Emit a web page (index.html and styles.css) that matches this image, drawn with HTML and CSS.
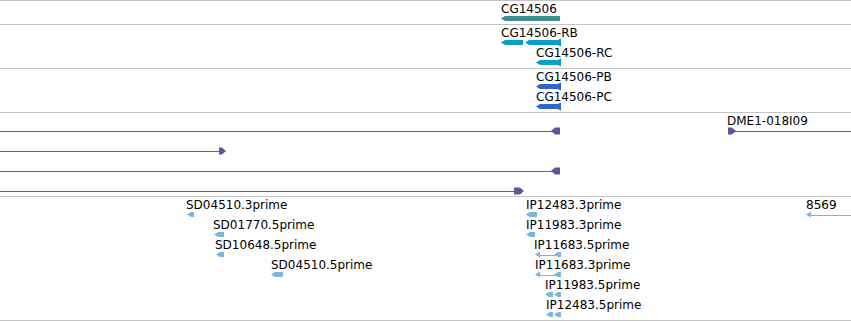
FILE: index.html
```html
<!DOCTYPE html>
<html lang="en">
<head>
    <meta charset="UTF-8" />
    <title>Tracks</title>
    <link rel="stylesheet" href="styles.css">
</head>
<body>
<div id="panel" class="panel"></div>

<script>
    const ROW = 20;
    const SVGNS = 'http://www.w3.org/2000/svg';

    // shapes use x in page px, row index, and the track colour
    const tracks = [
        { rows: 1, cls: 'gene', feats: [
            { label: 'CG14506', lx: 501, row: 0, parts: [['bar', 501, 560]] }
        ]},
        { rows: 2, cls: 'mrna', feats: [
            { label: 'CG14506-RB', lx: 501, row: 0, parts: [['exon', 501, 523], ['exon', 525, 558], ['tail', 552, 561]] },
            { label: 'CG14506-RC', lx: 536, row: 1, parts: [['exon', 536, 558], ['tail', 552, 561]] }
        ]},
        { rows: 2, cls: 'cds', feats: [
            { label: 'CG14506-PB', lx: 536, row: 0, parts: [['exon', 536, 558], ['tail', 552, 561]] },
            { label: 'CG14506-PC', lx: 536, row: 1, parts: [['exon', 536, 558], ['tail', 552, 561]] }
        ]},
        { rows: 4, cls: 'clone', feats: [
            { label: 'DME1-018I09', lx: 727, row: 0, parts: [['line', 733, 851], ['flagR', 728, 736]] },
            { row: 0, parts: [['line', 0, 553], ['flagL', 551, 560]] },
            { row: 1, parts: [['line', 0, 221], ['flagR', 219, 226]] },
            { row: 2, parts: [['line', 0, 553], ['flagL', 551, 560]] },
            { row: 3, parts: [['line', 0, 516], ['flagR', 514, 524]] }
        ]},
        { rows: 6, cls: 'est', feats: [
            { label: 'SD04510.3prime', lx: 186, row: 0, parts: [['exon', 187, 194]] },
            { label: 'SD01770.5prime', lx: 213, row: 1, parts: [['exon', 214, 224]] },
            { label: 'SD10648.5prime', lx: 215, row: 2, parts: [['exon', 216, 224]] },
            { label: 'SD04510.5prime', lx: 271, row: 3, parts: [['exon', 271, 283]] },
            { label: 'IP12483.3prime', lx: 526, row: 0, parts: [['exon', 526, 537]] },
            { label: 'IP11983.3prime', lx: 526, row: 1, parts: [['exon', 526, 535]] },
            { label: 'IP11683.5prime', lx: 534, row: 2, parts: [['line', 538, 556], ['head', 535, 540], ['exon', 554, 561]] },
            { label: 'IP11683.3prime', lx: 535, row: 3, parts: [['line', 538, 556], ['head', 535, 540], ['exon', 554, 561]] },
            { label: 'IP11983.5prime', lx: 545, row: 4, parts: [['exon', 545, 553], ['exon', 554, 561]] },
            { label: 'IP12483.5prime', lx: 546, row: 5, parts: [['exon', 546, 553], ['exon', 554, 561]] },
            { label: '8569', lx: 806, row: 0, parts: [['line', 808, 851], ['head', 806, 811]] }
        ]}
    ];

    function shape(kind, a, b, c) {
        const t = c - 2.5, u = c + 2.5;
        switch (kind) {
            case 'bar':
            case 'exon':
                return `M${a} ${c}L${a + 4} ${t}H${b}V${u}H${a + 4}Z`;
            case 'tail':
                return `M${a} ${c}L${b} ${c - 4}V${c + 4}Z`;
            case 'head':
                return `M${a} ${c}L${b} ${c - 3}V${c + 3}Z`;
            case 'flagL':
                return `M${a} ${c}L${a + 4} ${c - 3.5}H${b}V${c + 3.5}H${a + 4}Z`;
            case 'flagR':
                return `M${b} ${c}L${b - 4} ${c - 3.5}H${a}V${c + 3.5}H${b - 4}Z`;
        }
    }

    const panel = document.getElementById('panel');

    tracks.forEach(track => {
        const el = document.createElement('div');
        el.className = 'track ' + track.cls;
        const h = track.rows * ROW + 3;
        el.style.height = h + 'px';

        const svg = document.createElementNS(SVGNS, 'svg');
        svg.setAttribute('class', 'glyphs');
        svg.setAttribute('width', 851);
        svg.setAttribute('height', h);

        track.feats.forEach(f => {
            const c = f.row * ROW + 17.5;
            f.parts.forEach(([kind, a, b]) => {
                if (kind === 'line') {
                    const line = document.createElementNS(SVGNS, 'line');
                    line.setAttribute('x1', a);
                    line.setAttribute('x2', b);
                    line.setAttribute('y1', c + 0.5);
                    line.setAttribute('y2', c + 0.5);
                    svg.appendChild(line);
                } else {
                    const p = document.createElementNS(SVGNS, 'path');
                    p.setAttribute('d', shape(kind, a, b, kind.startsWith('flag') ? c + 0.5 : c));
                    svg.appendChild(p);
                }
            });
            if (f.label) {
                const span = document.createElement('span');
                span.className = 'label';
                span.textContent = f.label;
                span.style.left = f.lx + 'px';
                span.style.top = (f.row * ROW + 1) + 'px';
                el.appendChild(span);
            }
        });

        el.insertBefore(svg, el.firstChild);
        panel.appendChild(el);
    });
</script>
</body>
</html>
```

FILE: styles.css
```css
* {
    margin: 0;
    padding: 0;
    box-sizing: content-box;
}
html, body {
    background: #fff;
    font-family: "DejaVu Sans", sans-serif;
    font-size: 12px;
    color: #000;
    overflow: hidden;
}
.panel {
    width: 851px;
    border-top: 1px solid #c4c4c4;
}
.track {
    position: relative;
    border-bottom: 1px solid #c4c4c4;
    overflow: hidden;
}
.glyphs {
    position: absolute;
    top: 0;
    left: 0;
    display: block;
}
.label {
    position: absolute;
    line-height: 14px;
    white-space: nowrap;
}
.glyphs line {
    stroke-width: 1;
    shape-rendering: crispEdges;
}
.gene path { fill: #3d8d91; }
.mrna path { fill: #0aa0c6; }
.cds path { fill: #2d66c8; }
.clone path { fill: #6a50a2; }
.clone line { stroke: #6a50a2; }
.est path { fill: #7db6dd; }
.est line { stroke: #7db6dd; }
```
